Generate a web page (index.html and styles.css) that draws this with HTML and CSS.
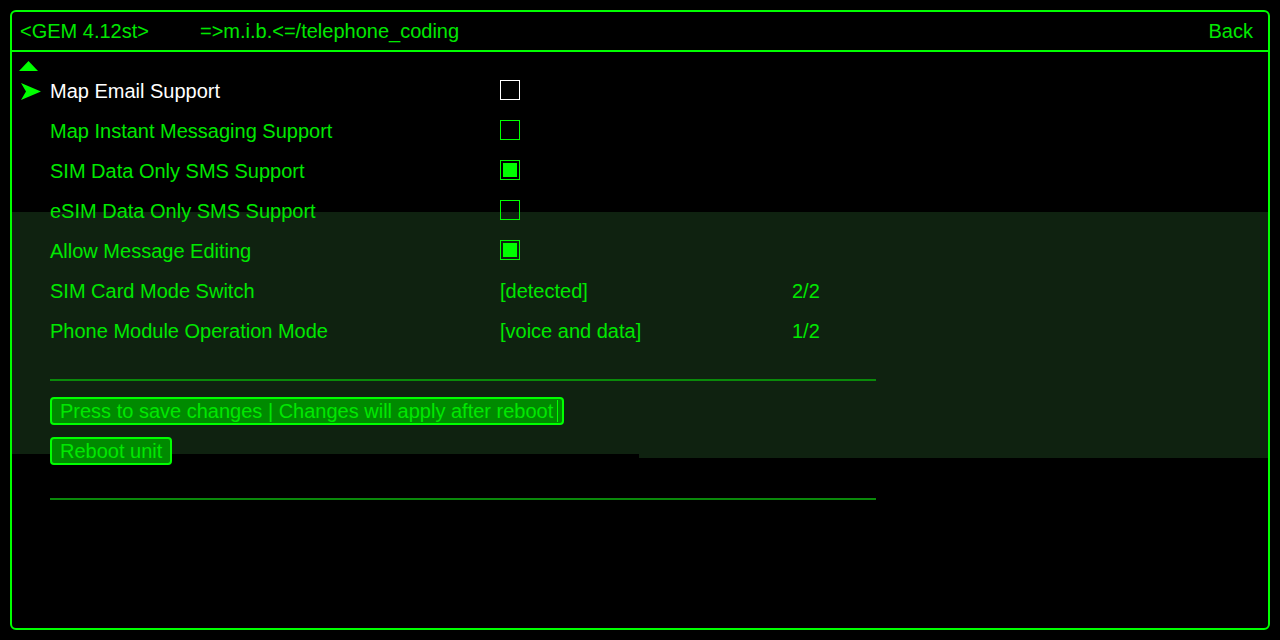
FILE: index.html
```html
<!DOCTYPE html>
<html lang="en">
<head>
  <meta charset="UTF-8"/>
  <title>telephone_coding</title>
  <link rel="stylesheet" href="styles.css">
</head>
<body>
  <div class="frame">
    <div class="band"></div>

    <header class="top">
      <span class="ver">&lt;GEM 4.12st&gt;</span>
      <span class="path">=&gt;m.i.b.&lt;=/telephone_coding</span>
      <span class="back">Back</span>
    </header>

    <div class="list">
      <div class="scroll-up">
        <svg width="19" height="10" viewBox="0 0 19 10"><polygon points="9.5,0 19,10 0,10" fill="#00ff00"/></svg>
      </div>

      <div class="row sel">
        <span class="mark"><svg width="20" height="17" viewBox="0 0 20 17"><polygon points="0,0 20,8.5 0,17 5,8.5" fill="#00ff00"/></svg></span>
        <span class="label">Map Email Support</span>
        <span class="val"><i class="cb"></i></span>
      </div>
      <div class="row">
        <span class="mark"></span>
        <span class="label">Map Instant Messaging Support</span>
        <span class="val"><i class="cb"></i></span>
      </div>
      <div class="row">
        <span class="mark"></span>
        <span class="label">SIM Data Only SMS Support</span>
        <span class="val"><i class="cb on"></i></span>
      </div>
      <div class="row">
        <span class="mark"></span>
        <span class="label">eSIM Data Only SMS Support</span>
        <span class="val"><i class="cb"></i></span>
      </div>
      <div class="row">
        <span class="mark"></span>
        <span class="label">Allow Message Editing</span>
        <span class="val"><i class="cb on"></i></span>
      </div>
      <div class="row">
        <span class="mark"></span>
        <span class="label">SIM Card Mode Switch</span>
        <span class="val txt">[detected]</span>
        <span class="idx">2/2</span>
      </div>
      <div class="row">
        <span class="mark"></span>
        <span class="label">Phone Module Operation Mode</span>
        <span class="val txt">[voice and data]</span>
        <span class="idx">1/2</span>
      </div>

      <div class="divider"></div>
      <div class="buttons">
        <button class="btn">Press to save changes | Changes will apply after reboot<span class="caret"></span></button>
        <button class="btn">Reboot unit</button>
      </div>
      <div class="divider second"></div>
    </div>
  </div>
</body>
</html>
```

FILE: styles.css
```css
:root{
  --lime:#00ff00; --text:#00e800; --line:#0a8a0a;
  --btn:#008a00; --band:#0f2210;
}
*{box-sizing:border-box;margin:0;padding:0;}
html,body{background:#000;}
body{font-family:"Liberation Sans",Arial,sans-serif;font-size:20px;color:var(--text);}

.frame{position:relative;margin:10px;height:620px;border:2px solid var(--lime);border-radius:6px;}
.band{position:absolute;left:0;right:0;top:200px;height:246px;background:var(--band);
  clip-path:polygon(0 0,100% 0,100% 100%,627px 100%,627px 242px,0 242px);}

.top{position:relative;display:flex;align-items:center;height:40px;padding:0 15px 0 8px;border-bottom:2px solid var(--lime);}
.top .ver{width:180px;}
.top .back{margin-left:auto;}

.list{position:relative;padding-left:8px;}
.scroll-up{height:18px;padding-top:9px;line-height:0;}
.scroll-up svg{margin-left:-1px;}

.row{display:grid;grid-template-columns:30px 450px 292px auto;align-items:center;height:40px;}
.row .mark{line-height:0;padding-left:1px;padding-top:2px;}
.row .label,.row .txt,.row .idx{padding-top:2px;}
.row.sel .label{color:#fff;}
.cb{display:block;position:relative;width:20px;height:20px;border:1px solid var(--lime);}
.row.sel .cb{border-color:#fff;}
.cb.on::after{content:"";position:absolute;left:2px;top:2px;width:14px;height:14px;background:var(--lime);}

.divider{margin:29px 0 0 30px;width:826px;height:2px;background:var(--line);}
.divider.second{margin-top:33px;}

.buttons{display:flex;flex-direction:column;align-items:flex-start;gap:12px;margin:16px 0 0 30px;}
.btn{display:flex;align-items:center;height:28px;padding:0 4px 0 8px;border:2px solid var(--lime);border-radius:4px;
  background:var(--btn);color:var(--text);font:inherit;font-size:20px;line-height:24px;}
.btn .caret{display:inline-block;width:1px;height:22px;margin-left:4px;background:var(--lime);}
.buttons .btn:last-child{padding-right:8px;}
```
